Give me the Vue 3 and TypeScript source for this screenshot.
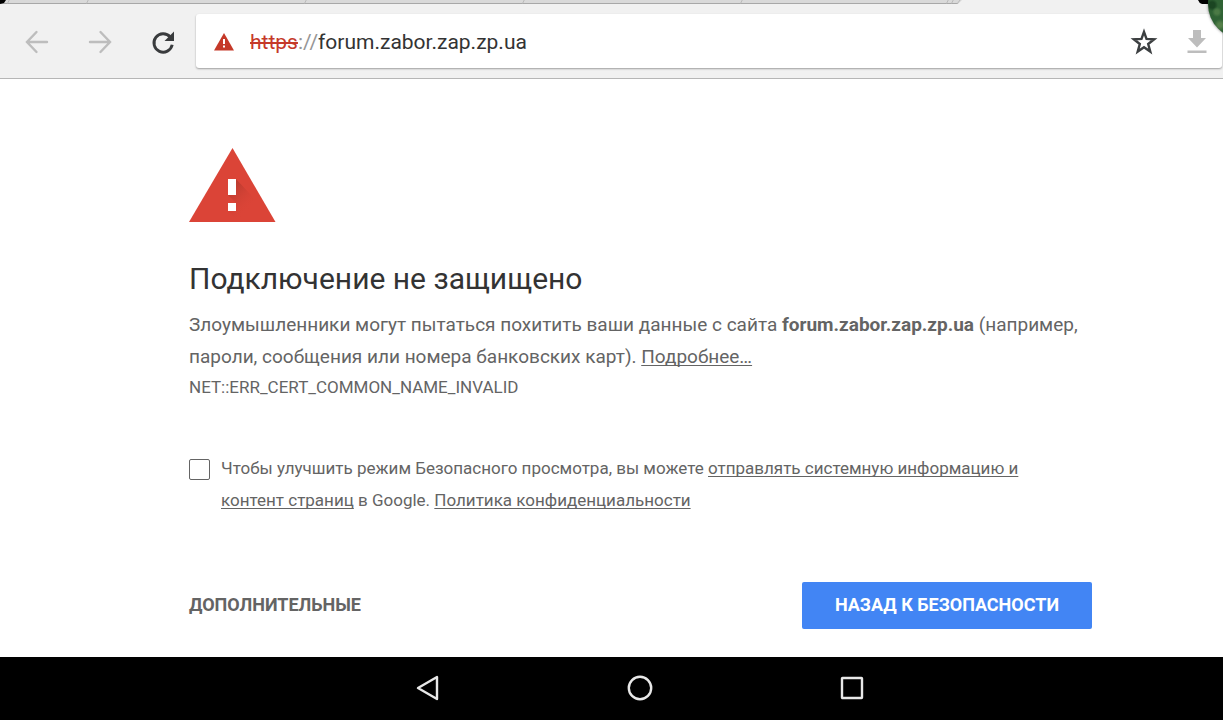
<script setup lang="ts">
import { ref } from 'vue'

const host = ref('forum.zabor.zap.zp.ua')
const sendReports = ref(false)
</script>

<template>
  <div class="screen">
    <svg class="tabs" viewBox="0 0 1223 4" preserveAspectRatio="xMinYMin slice" aria-hidden="true">
      <rect width="1223" height="4" fill="#d9d9d9" />
      <path d="M0 3.5H958" stroke="#a8a8a8" />
      <path d="M958 4l4-4h261v4z" fill="#f1f1f1" />
      <path d="M86.500 3.500l2-4M304.500 3.500l2-4M522.500 3.500l2-4M740.500 3.500l2-4M946.500 3.500l2-4M951.500 3.500l2-4M7.500 3.500l2-4M957 4l3-4" fill="none" stroke="#bababa" />
      <path d="M0 0h6l-2 3-4 1zM1198 0h25v4h-21q-3-1-4-4z" fill="#000" />
    </svg>

    <header class="toolbar">
      <button class="tool" type="button" aria-label="Назад">
        <svg width="26" height="26" viewBox="0 0 26 26" fill="none" stroke="#bdbdbd" stroke-width="2.400" stroke-linecap="round"><path d="M12.500 3L3 13l9.500 10M3.500 13H23" /></svg>
      </button>
      <button class="tool" type="button" aria-label="Вперёд">
        <svg width="26" height="26" viewBox="0 0 26 26" fill="none" stroke="#bdbdbd" stroke-width="2.400" stroke-linecap="round"><path d="M13.500 3L23 13l-9.500 10M22.500 13H3" /></svg>
      </button>
      <button class="tool" type="button" aria-label="Обновить">
        <svg width="26" height="26" viewBox="0 0 26 26"><path d="M20.200 8A9.200 9.200 0 1 0 22.200 15.800" fill="none" stroke="#393b3d" stroke-width="2.900" /><path d="M24 2.500v9.500h-9.500z" fill="#393b3d" /></svg>
      </button>
      <div class="omnibox">
        <svg class="alert" width="20" height="18" viewBox="0 0 20 18"><path d="M10 0l10 17.500H0z" fill="#c53929" /><path d="M9 6h2v5H9zM9 12.500h2v2H9z" fill="#fff" /></svg>
        <span class="scheme"><s>https</s>://</span>
        <input v-model="host" class="url" type="text" aria-label="Адрес" spellcheck="false" />
        <button class="action" type="button" aria-label="В закладки">
          <svg width="28" height="28" viewBox="0 0 28 28"><path d="M14 3.800l2.500 7.100 7.700.3-6 4.800 2.100 7.600L14 19.300l-6.300 4.300L9.800 16l-6-4.800 7.700-.3z" fill="none" stroke="#3c3f41" stroke-width="2.400" /></svg>
        </button>
        <button class="action" type="button" aria-label="Скачать">
          <svg width="20" height="24" viewBox="0 0 20 24"><path d="M6 0h8v8h5l-9 9.500L1 8h5zM.5 20.500h19v2.500H.5z" fill="#bdbdbd" /></svg>
        </button>
      </div>
    </header>

    <main class="warning">
      <svg class="danger" width="87" height="76" viewBox="0 0 87 76" aria-hidden="true">
        <defs>
          <linearGradient id="fade" gradientUnits="userSpaceOnUse" x1="40" y1="43" x2="62" y2="65">
            <stop offset="0" stop-color="#b83a2e" stop-opacity=".9" /><stop offset=".9" stop-color="#db4437" stop-opacity="0" />
          </linearGradient>
        </defs>
        <path d="M43.500 1L86.500 75H0z" fill="#db4437" />
        <path d="M47 32l38 41v2H66L39 48h8zM47 56l19 19H50L39 64h8z" fill="url(#fade)" />
        <path d="M39 32h8v16h-8zM39 56h8v8h-8z" fill="#fff" />
      </svg>
      <h1>Подключение не защищено</h1>
      <p class="lead">
        Злоумышленники могут пытаться похитить ваши данные с сайта <strong>forum.zabor.zap.zp.ua</strong>
        (например, пароли, сообщения или номера банковских карт). <a href="#">Подробнее…</a>
      </p>
      <p class="code">NET::ERR_CERT_COMMON_NAME_INVALID</p>
      <div class="consent">
        <input id="reports" v-model="sendReports" type="checkbox" />
        <label for="reports">
          Чтобы улучшить режим Безопасного просмотра, вы можете <a href="#">отправлять системную информацию и контент страниц</a>
          в Google. <a href="#">Политика конфиденциальности</a>
        </label>
      </div>
      <div class="buttons">
        <button class="details" type="button">ДОПОЛНИТЕЛЬНЫЕ</button>
        <button class="safety" type="button">НАЗАД К БЕЗОПАСНОСТИ</button>
      </div>
    </main>

    <nav class="system">
      <button type="button" aria-label="Назад">
        <svg width="28" height="28" viewBox="0 0 28 28"><path d="M23 3v22L4 14z" /></svg>
      </button>
      <button type="button" aria-label="Домой">
        <svg width="28" height="28" viewBox="0 0 28 28"><circle cx="14" cy="14" r="11.200" /></svg>
      </button>
      <button type="button" aria-label="Недавние">
        <svg width="28" height="28" viewBox="0 0 28 28"><rect x="4" y="4" width="20" height="20" rx=".5" /></svg>
      </button>
    </nav>

    <div class="bubble" aria-hidden="true"></div>
  </div>
</template>

<style>
body {
  margin: 0;
}
</style>

<style scoped>
.screen {
  position: relative;
  display: flex;
  flex-direction: column;
  min-height: 100vh;
  overflow: hidden;
  background: #fff;
  color: #646464;
  font-family: Roboto, "Noto Sans", sans-serif;
}
button {
  padding: 0;
  border: 0;
  background: none;
  font-family: inherit;
  cursor: pointer;
}
svg {
  display: block;
}
.tabs {
  width: 100%;
  height: 4px;
}
.toolbar {
  display: flex;
  align-items: center;
  box-sizing: border-box;
  height: 75px;
  padding: 2px 1px 0 5px;
  border-bottom: 1px solid #b6b6b6;
  background: #f1f1f1;
}
.tool {
  display: grid;
  place-items: center;
  width: 63px;
  height: 56px;
}
.omnibox {
  display: flex;
  flex: 1;
  align-items: center;
  box-sizing: border-box;
  height: 54px;
  margin: 0 0 2px 2px;
  padding: 2px 15px 0 18px;
  border-radius: 3px;
  background: #fff;
  box-shadow: 0 1px 2px rgba(0, 0, 0, 0.35);
}
.scheme {
  margin-left: 16px;
  color: #969696;
  font-size: 21px;
}
.scheme s {
  color: #c53929;
}
.url {
  flex: 1;
  min-width: 0;
  padding: 0;
  border: 0;
  outline: 0;
  background: none;
  color: #333;
  font: 21px Roboto, "Noto Sans", sans-serif;
}
.action {
  margin-left: 29px;
}
.warning {
  flex: 1;
  padding: 68px 131px 28px 189px;
}
h1 {
  margin: 37px 0 0;
  color: #333;
  font-size: 30px;
  font-weight: 400;
  line-height: 38px;
}
p {
  margin: 0;
}
.lead {
  margin-top: 11px;
  font-size: 19px;
  line-height: 32px;
}
.code {
  font-size: 17px;
  line-height: 28px;
}
a {
  color: inherit;
  text-underline-offset: 2px;
  text-decoration-skip-ink: none;
}
.consent {
  display: flex;
  gap: 11px;
  margin-top: 51px;
  padding-right: 40px;
  font-size: 17px;
  line-height: 32px;
}
.consent input {
  flex: none;
  appearance: none;
  box-sizing: border-box;
  width: 21px;
  height: 21px;
  margin: 7px 0 0;
  border: 1px solid #646464;
  border-radius: 2px;
  background: #fff;
}
.consent input:checked {
  background: #4285f4;
}
.buttons {
  display: flex;
  align-items: center;
  justify-content: space-between;
  margin-top: 66px;
}
.buttons button {
  color: #646464;
  font-size: 18px;
  font-weight: 700;
}
.buttons .details {
  padding-bottom: 2px;
}
.buttons .safety {
  height: 47px;
  padding: 0 33px 2px;
  border-radius: 2px;
  background: #4285f4;
  color: #fff;
}
.system {
  display: flex;
  justify-content: center;
  gap: 184px;
  padding: 17px 0 18px 57px;
  background: #000;
}
.system svg {
  fill: none;
  stroke: #e8e8e8;
  stroke-width: 2.4;
  stroke-linejoin: round;
}
.bubble {
  position: absolute;
  top: -31px;
  right: -55px;
  width: 70px;
  height: 70px;
  border-radius: 50%;
  background:
    radial-gradient(circle at 9px 43px, #4b7a45 0 2px, transparent 5px),
    radial-gradient(circle at 12px 56px, #55804a 0 2px, transparent 6px),
    radial-gradient(circle at 4px 36px, #1b4522 0 3px, transparent 6px),
    #2f6234;
  box-shadow: 0 0 3px rgba(0, 0, 0, 0.5);
}
</style>
